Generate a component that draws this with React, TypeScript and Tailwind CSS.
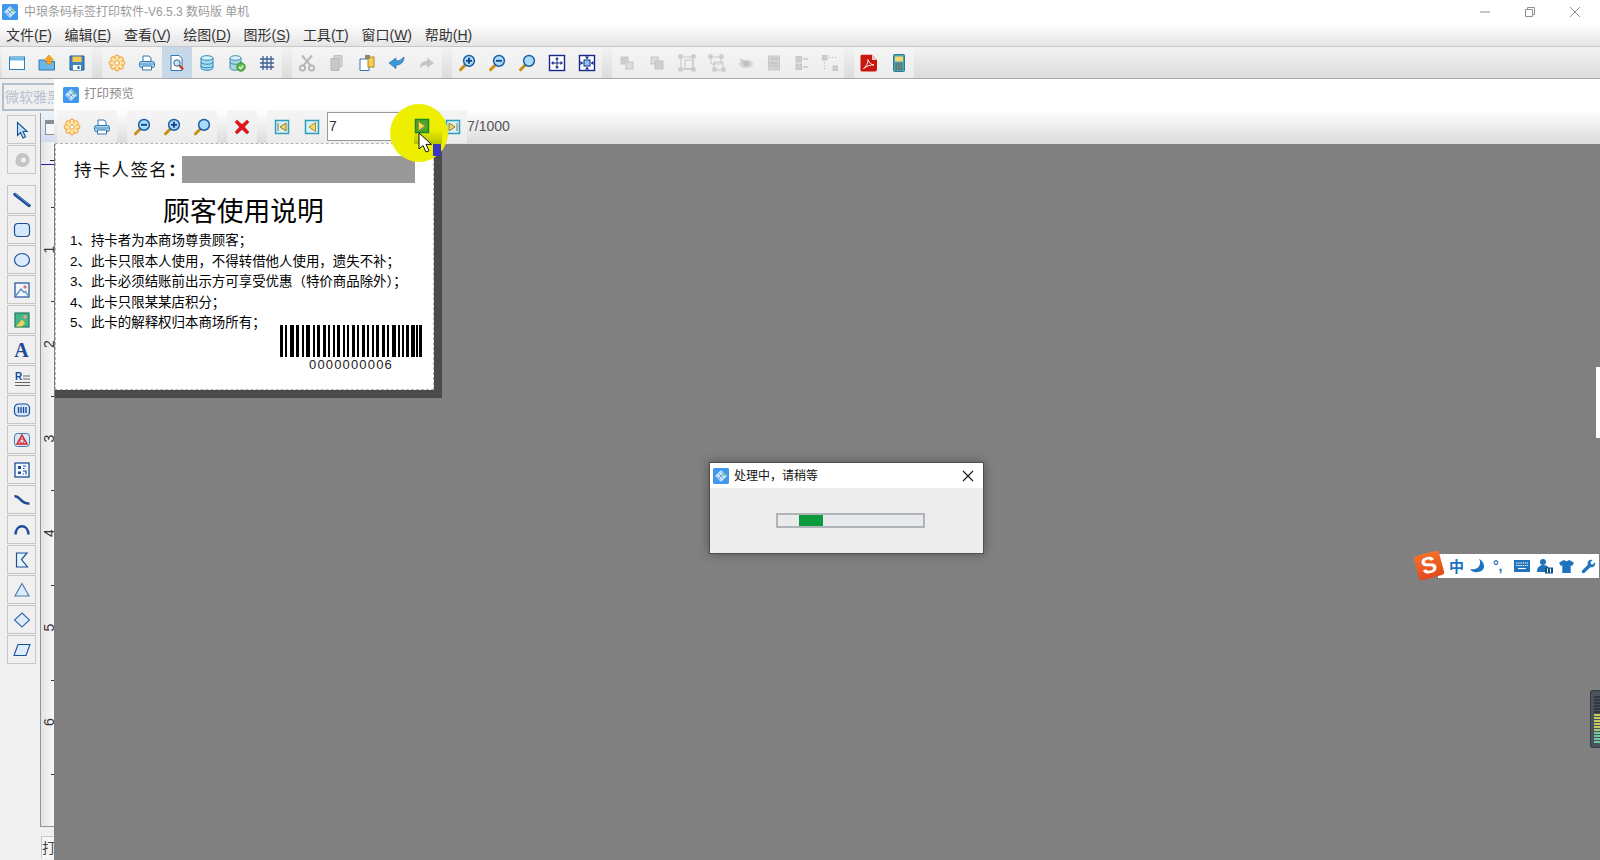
import React from "react";

const menus = [
  ["文件", "F"],
  ["编辑", "E"],
  ["查看", "V"],
  ["绘图", "D"],
  ["图形", "S"],
  ["工具", "T"],
  ["窗口", "W"],
  ["帮助", "H"],
];

const lines = [
  "1、持卡者为本商场尊贵顾客；",
  "2、此卡只限本人使用，不得转借他人使用，遗失不补；",
  "3、此卡必须结账前出示方可享受优惠（特价商品除外）；",
  "4、此卡只限某某店积分；",
];

function Svg({ size = 18, children }: { size?: number; children: React.ReactNode }) {
  return (
    <svg width={size} height={size} viewBox="0 0 18 18" fill="none">
      {children}
    </svg>
  );
}

function Logo({ size = 16 }: { size?: number }) {
  return (
    <svg width={size} height={size} viewBox="0 0 16 16">
      <rect width="16" height="16" rx="1.5" fill="#3f97ee" />
      <path d="M8 2 14 8 8 14 2 8Z" fill="#cfe6fb" />
      <path d="M5.5 5.500 10.500 10.500M8 3.500 12.500 8M3.500 8 8 12.500M10.500 5.500 5.500 10.500" stroke="#3f97ee" strokeWidth="0.800" />
      <circle cx="11" cy="6.500" r="1.300" fill="#7ecb5a" />
    </svg>
  );
}

const Gear = () => (
  <Svg>
    {[0, 45, 90, 135, 180, 225, 270, 315].map((a) => (
      <circle
        key={a}
        cx={9 + 5.6 * Math.cos((a * Math.PI) / 180)}
        cy={9 + 5.6 * Math.sin((a * Math.PI) / 180)}
        r="2.3"
        fill="#fde6a8"
        stroke="#e8952c"
        strokeWidth="0.9"
      />
    ))}
    <circle cx="9" cy="9" r="4.6" fill="#fde6a8" />
    <circle cx="9" cy="9" r="2.3" fill="#fff" stroke="#e8952c" />
  </Svg>
);

const Printer = () => (
  <Svg>
    <path d="M5 8V2h6l2 2v4" fill="#fff" stroke="#2f77ad" />
    <rect x="1.5" y="7.5" width="15" height="6" rx="2" fill="#a9d6f2" stroke="#2f77ad" />
    <path d="M4.5 12h9v4h-9z" fill="#fff" stroke="#2f77ad" />
    <path d="M1.5 10h15" stroke="#2f77ad" strokeWidth="0.7" />
  </Svg>
);

const Zoom = ({ mark }: { mark?: "+" | "-" }) => (
  <Svg>
    <path d="M2.5 15.8 7 11.2" stroke="#c98f17" strokeWidth="3" strokeLinecap="round" />
    <circle cx="11" cy="6.8" r="5.4" fill="#a8dcf8" stroke="#1b5da6" strokeWidth="1.5" />
    {mark && <path d="M8 6.8h6" stroke="#12408f" strokeWidth="1.8" />}
    {mark === "+" && <path d="M11 3.8v6" stroke="#12408f" strokeWidth="1.8" />}
  </Svg>
);

const GrayBlocks = ({ children }: { children: React.ReactNode }) => (
  <Svg>
    <g fill="#cecece" stroke="#c6c6c6">
      {children}
    </g>
  </Svg>
);

const Nav = ({ kind, green }: { kind: "first" | "prev" | "next" | "last"; green?: boolean }) => {
  const stroke = green ? "#1a8a2a" : "#2f9dbb";
  return (
    <Svg>
      <rect x="2.5" y="2.5" width="13" height="13" fill={green ? "#4ea62c" : "#d8f1f7"} stroke={stroke} strokeWidth="1.5" />
      {kind === "first" && <path d="M5 5v8M13 5v8L7 9z" stroke="#8a7a30" fill="#f6d860" />}
      {kind === "prev" && <path d="M12.5 4.5v9L6 9z" fill="#f6d860" stroke="#a89030" />}
      {kind === "next" && <path d="M5.5 4.5v9L12 9z" fill="#f6e060" stroke="#a89030" />}
      {kind === "last" && <path d="M13 5v8M5 5v8l6-4z" stroke="#8a7a30" fill="#f6d860" />}
    </Svg>
  );
};

const toolbarIcons: Record<string, React.ReactNode> = {
  window: (
    <Svg>
      <rect x="1.5" y="3" width="15" height="12.5" fill="#fff" stroke="#2c7eb6" />
      <rect x="2" y="3.5" width="14" height="3" fill="#6bbbe8" />
    </Svg>
  ),
  open: (
    <Svg>
      <path d="M1 6h5l1 1.5h9.5V16H1z" fill="#6db7e6" stroke="#2c78b0" />
      <path d="M11 1 6.5 6h2.4v4h4.2V6h2.4z" fill="#f6a623" stroke="#d98210" strokeWidth="0.6" />
    </Svg>
  ),
  save: (
    <Svg>
      <path d="M2 2h14v14H2z" fill="#3f86c4" stroke="#1f5f99" />
      <rect x="4.5" y="2.5" width="9" height="5.5" fill="#f7c84a" />
      <rect x="5" y="11" width="8" height="5" fill="#fff" />
      <rect x="9.5" y="12" width="2" height="3" fill="#1f5f99" />
    </Svg>
  ),
  gear: <Gear />,
  printer: <Printer />,
  preview: (
    <Svg>
      <path d="M3 1.5h8l3 3v12H3z" fill="#fff" stroke="#2c78b0" />
      <circle cx="9" cy="9" r="3.2" fill="#bfe5f7" stroke="#44607a" />
      <path d="m11.5 11.5 3.5 4" stroke="#d0342c" strokeWidth="2.2" />
    </Svg>
  ),
  db: (
    <Svg>
      <path d="M3 4v10c0 3 12 3 12 0V4" fill="#a8dcf2" stroke="#2c8ab8" />
      <ellipse cx="9" cy="4" rx="6" ry="2.3" fill="#d9f2fb" stroke="#2c8ab8" />
      <path d="M3 8c0 3 12 3 12 0M3 11.5c0 3 12 3 12 0" stroke="#2c8ab8" />
    </Svg>
  ),
  dbcheck: (
    <Svg>
      <path d="M2 4v10c0 3 11 3 11 0V4" fill="#a6d8e4" stroke="#3d8ca5" />
      <ellipse cx="7.5" cy="4" rx="5.5" ry="2.3" fill="#d9f2fb" stroke="#3d8ca5" />
      <path d="M2 8c0 3 11 3 11 0" stroke="#3d8ca5" />
      <circle cx="13" cy="13" r="4.2" fill="#5fbb46" stroke="#3a9030" />
      <path d="m11 13 1.6 1.6 2.6-3" stroke="#fff" strokeWidth="1.3" />
    </Svg>
  ),
  grid: (
    <Svg>
      <path d="M2 5h14M2 9h14M2 13h14M5 2v14M9 2v14M13 2v14" stroke="#3c5f96" strokeWidth="1.3" />
    </Svg>
  ),
  cut: (
    <Svg>
      <path d="M4 1.5 13 12M14 1.5 5 12" stroke="#b9b9b9" strokeWidth="2" />
      <circle cx="4.5" cy="14" r="2.6" stroke="#b4b4b4" strokeWidth="1.8" />
      <circle cx="13.5" cy="14" r="2.6" stroke="#b4b4b4" strokeWidth="1.8" />
    </Svg>
  ),
  copy: (
    <Svg>
      <path d="M6 1.5h8v11H6z" fill="#d2d2d2" stroke="#c0c0c0" />
      <path d="M3 4.5h8v12H3z" fill="#c8c8c8" stroke="#b8b8b8" />
    </Svg>
  ),
  paste: (
    <Svg>
      <path d="M2 5h9v11.5H2z" fill="#fff" stroke="#2c78b0" />
      <rect x="10" y="3" width="6" height="10" fill="#f4cf55" stroke="#b08a20" />
      <rect x="7" y="1" width="5" height="4" fill="#8a8a6a" />
    </Svg>
  ),
  undo: (
    <Svg>
      <path d="M16 3c0 6-4 8-8 8v3.5L1 9l7-5v3c3 0 5-1 8-4z" fill="#3d9ad8" stroke="#1f6fa8" strokeWidth="0.7" />
    </Svg>
  ),
  redo: (
    <Svg>
      <path d="M2 14c0-5 3-7 7-7V3.5l7 5.5-7 5v-3c-3 0-5 1-7 3z" fill="#c4c4c4" />
    </Svg>
  ),
  zoomin: <Zoom mark="+" />,
  zoomout: <Zoom mark="-" />,
  zoom: <Zoom />,
  fit: (
    <Svg>
      <rect x="1.5" y="1.5" width="15" height="15" fill="#fff" stroke="#14298a" strokeWidth="1.4" />
      <path d="M9 3 7 5.500h4zM9 15l-2-2.500h4zM3 9l2.500-2v4zM15 9l-2.500-2v4z" fill="#14298a" />
      <path d="M9 5v8M5 9h8" stroke="#14298a" />
    </Svg>
  ),
  fit2: (
    <Svg>
      <rect x="1.5" y="1.5" width="15" height="15" fill="#fff" stroke="#14298a" strokeWidth="1.4" />
      <rect x="6" y="6" width="6" height="6" fill="#8fc8f2" stroke="#14298a" />
      <path d="M9 5.500 7 2.500h4zM9 12.500l-2 3h4zM5.500 9l-3-2v4zM12.500 9l3-2v4z" fill="#14298a" />
    </Svg>
  ),
  front: (
    <GrayBlocks>
      <rect x="3" y="3" width="7" height="7" />
      <rect x="8" y="8" width="7" height="7" fill="#dcdcdc" />
    </GrayBlocks>
  ),
  back: (
    <GrayBlocks>
      <rect x="3" y="3" width="7" height="7" fill="#dcdcdc" />
      <rect x="7" y="7" width="8" height="8" />
    </GrayBlocks>
  ),
  group: (
    <GrayBlocks>
      <path d="M3 3h12v12H3z" fill="none" />
      <rect x="1" y="1" width="3" height="3" />
      <rect x="14" y="14" width="3" height="3" />
      <rect x="1" y="14" width="3" height="3" />
      <rect x="14" y="1" width="3" height="3" />
      <rect x="7" y="6" width="8" height="9" fill="none" />
    </GrayBlocks>
  ),
  ungroup: (
    <GrayBlocks>
      <path d="M3 3h10v7H3zM6 8h9v8H6z" fill="none" />
      <rect x="1" y="1" width="3" height="3" />
      <rect x="12" y="1" width="3" height="3" />
      <rect x="14" y="14" width="3" height="3" />
      <rect x="5" y="14" width="3" height="3" />
    </GrayBlocks>
  ),
  eye: (
    <Svg>
      <ellipse cx="9" cy="10" rx="7" ry="4.200" fill="#d6d6d6" />
      <circle cx="9" cy="9.500" r="2.800" fill="#bcbcbc" />
      <path d="m3 5 10 7" stroke="#c4c4c4" strokeWidth="1.500" />
    </Svg>
  ),
  book: (
    <Svg>
      <rect x="3.500" y="2" width="11" height="14" fill="#d4d4d4" stroke="#c8c8c8" />
      <path d="M5 5h8M5 9h8M5 12h8" stroke="#bcbcbc" />
    </Svg>
  ),
  list: (
    <GrayBlocks>
      <rect x="3" y="2.500" width="5.500" height="5.500" />
      <rect x="3" y="10" width="5.500" height="5.500" />
      <path d="M10 5h5M10 13h5" strokeWidth="1.500" />
    </GrayBlocks>
  ),
  flow: (
    <GrayBlocks>
      <rect x="1.500" y="1.500" width="4.500" height="4.500" />
      <rect x="12" y="12" width="4.500" height="4.500" />
      <path d="M8 3.500h8M3.500 8v8" fill="none" strokeDasharray="1.500 1.500" />
    </GrayBlocks>
  ),
  pdf: (
    <svg width="18" height="18" viewBox="0 0 18 18" fill="none">
      <path d="M2 .8h10L17 6v9.500a2 2 0 0 1-2 2H2a1.500 1.500 0 0 1-1.500-1.500V2.500A1.500 1.500 0 0 1 2 .8z" fill="#c9170f" />
      <path d="M12 .8V6h5z" fill="#f3c7c2" />
      <path d="M3.500 14.500C6 13 8.500 8.500 8 5.500c1 3 2.500 5 6 5.500-3-.3-7 .7-10.500 3.500z" stroke="#fff" strokeWidth="0.900" />
    </svg>
  ),
  calc: (
    <Svg>
      <rect x="3.500" y="0.500" width="11" height="17" rx="1" fill="#4ba3b8" stroke="#2b7a90" />
      <rect x="5" y="2.500" width="8" height="5" fill="#f7d96c" />
      <path d="M5.500 10h7M5.500 12.500h7M5.500 15h7" stroke="#75532a" strokeWidth="1.400" strokeDasharray="1.500 1" />
    </Svg>
  ),
};

const sideIcons: React.ReactNode[] = [
  <Svg key="a">
    <path d="M4.500 1.500v13l3-3 2.500 5.500 2.500-1.200-2.500-5.300h4.200z" fill="#bfe3fa" stroke="#1c4f96" strokeWidth="1.100" />
  </Svg>,
  <Svg key="b">
    <circle cx="9.500" cy="9" r="7" fill="#c4c4c4" />
    <path d="M2 11h5l-2 5z" fill="#c4c4c4" />
    <circle cx="10.500" cy="9" r="2.500" fill="#f0f0f0" />
  </Svg>,
  null,
  <Svg key="c">
    <path d="M2 3.500 16 14.500" stroke="#1d4f98" strokeWidth="3.400" strokeLinecap="round" />
    <path d="M2.500 3 16 13.500" stroke="#6ea6dc" strokeWidth="0.800" />
  </Svg>,
  <Svg key="d">
    <rect x="1.500" y="2.500" width="15" height="13" rx="3.500" fill="#d6e9fb" stroke="#1d4f98" strokeWidth="1.200" />
  </Svg>,
  <Svg key="e">
    <ellipse cx="9" cy="9" rx="7.500" ry="6.500" fill="#d9ebfc" stroke="#1d4f98" strokeWidth="1.200" />
  </Svg>,
  <Svg key="f">
    <rect x="2" y="2" width="14" height="14" fill="#eef6fc" stroke="#1d4f98" strokeWidth="1.200" />
    <circle cx="12" cy="6" r="1.700" fill="#e8716a" />
    <path d="M3 14.500 8 8l3 3.500 1.500-1 2.500 4" stroke="#5a8ac0" strokeWidth="1.300" />
  </Svg>,
  <Svg key="g">
    <rect x="2" y="2" width="14" height="14" fill="#46b58a" stroke="#1f7a5c" strokeWidth="1.200" />
    <circle cx="12" cy="6" r="1.800" fill="#f0a090" />
    <path d="M3 15.500 9 8.500l3 3.500-3 3.500z" fill="#f4d25a" />
  </Svg>,
  <span key="h" className="font-['Liberation_Serif',serif] text-[20px] font-bold leading-none text-[#1a4a9a]">
    A
  </span>,
  <Svg key="i">
    <text x="2" y="9" fontSize="10" fontWeight="700" fill="#1a4a9a" fontFamily="Liberation Sans">
      R
    </text>
    <path d="M10 5h7M10 8h7M2 11.500h15M2 14.500h15" stroke="#555" strokeWidth="0.900" />
  </Svg>,
  <Svg key="j">
    <rect x="1.500" y="3" width="15" height="12" rx="4" fill="#d6e9fb" stroke="#1d4f98" strokeWidth="1.200" />
    <path d="M5.500 6v6M8 6v6M10.500 6v6M13 6v6" stroke="#1d4f98" strokeWidth="1.400" />
  </Svg>,
  <Svg key="k">
    <rect x="1.500" y="2.500" width="15" height="13" rx="3" fill="#d6e9fb" stroke="#4a78b0" />
    <path d="M9 4 14 13H4z" stroke="#d8232a" strokeWidth="1.500" />
    <circle cx="9" cy="10" r="2.200" stroke="#d8232a" />
  </Svg>,
  <Svg key="l">
    <rect x="2" y="2" width="14" height="14" fill="#f3f9fe" stroke="#1d4f98" strokeWidth="1.300" />
    <path d="M5 5h3v3H5zM5 10.500h3v2.500H5z" fill="#1d4f98" />
    <path d="M10 5h3M10 7.500h1.500M10 10h3v3.500M11 13h-1" stroke="#1d4f98" strokeWidth="1.200" />
  </Svg>,
  <Svg key="m">
    <path d="M1.500 5.500C7 4 7 13 16.500 12.500" stroke="#1d4f98" strokeWidth="2.600" />
  </Svg>,
  <Svg key="n">
    <path d="M2.500 13.500C3 2.500 15 2.500 15.500 13.500" stroke="#1d4f98" strokeWidth="2.400" />
  </Svg>,
  <Svg key="o">
    <path d="M3.500 2h10.500L8.500 8.500l6 7.500h-11z" fill="#e6f2fc" stroke="#1d4f98" strokeWidth="1.200" />
  </Svg>,
  <Svg key="p">
    <path d="M9 2.500 16 15H2z" fill="#dcecfb" stroke="#4a78b0" strokeWidth="1.100" />
  </Svg>,
  <Svg key="q">
    <path d="M9 2 16.500 9 9 16 1.500 9z" fill="#dcecfb" stroke="#3a68a4" strokeWidth="1.100" />
  </Svg>,
  <Svg key="r">
    <path d="M5 3.500h12L13 14.500H1z" fill="#dcecfb" stroke="#1d4f98" strokeWidth="1.100" />
  </Svg>,
];

function ToolButton({ name, narrow, active }: { name: string; narrow?: boolean; active?: boolean }) {
  return (
    <div className={`flex h-full items-center justify-center ${narrow ? "w-[28px]" : "w-[30px]"} ${active ? "bg-[#c7d9e8]" : ""}`}>
      {toolbarIcons[name]}
    </div>
  );
}

function ToolGroup({ children }: { children: React.ReactNode }) {
  return <div className="flex h-full bg-linear-to-b from-[#f5f5f5] to-[#ececec]">{children}</div>;
}

const barWidths = [3, 2, 2, 3, 4, 2, 3, 3, 2, 2, 4, 3, 2, 2, 3, 3, 3, 2, 2, 3, 2, 2, 3, 3, 2, 2, 2, 3, 3, 2, 2, 3, 3, 2, 2, 3, 2, 2, 3, 3, 3, 2, 2, 3, 4, 2, 2, 2, 2, 2, 3, 2, 4, 1, 2, 1, 3];

function Barcode() {
  let x = 0;
  const bars = barWidths.map((w, i) => {
    const el = i % 2 === 0 ? <rect key={i} x={x} y="0" width={w} height="32" fill="#000" /> : null;
    x += w;
    return el;
  });
  return (
    <svg width="142" height="32" viewBox={`0 0 ${x} 32`} preserveAspectRatio="none" shapeRendering="crispEdges">
      {bars}
    </svg>
  );
}

function RulerMarks() {
  const nums = [1, 2, 3, 4, 5, 6];
  const ticks = [208, 302, 397, 491, 586, 681, 775];
  return (
    <svg width="13" height="684" viewBox="0 0 13 684" className="block overflow-visible">
      <path d="M0 22.500h13" stroke="#2a1fa8" />
      <path d="M9 18.500h4" stroke="#222" />
      {ticks.map((t) => (
        <path key={t} d={`M10 ${t - 143 + 0.5}h3`} stroke="#333" />
      ))}
      {nums.map((n, i) => (
        <text
          key={n}
          transform={`translate(13 ${107.500 + i * 94.500}) rotate(-90)`}
          textAnchor="middle"
          fontSize="14"
          fill="#333"
          fontFamily="Liberation Sans"
        >
          {n}
        </text>
      ))}
    </svg>
  );
}

export default function App() {
  return (
    <div className="relative flex h-[860px] w-[1600px] flex-col overflow-hidden bg-[#f0f0f0] font-['Liberation_Sans','Noto_Sans_CJK_SC',sans-serif]">
      {/* title + menu */}
      <div className="h-[47px] shrink-0 border-b border-[#c9c9c9] bg-linear-to-b from-white from-50% to-[#e5e5e5]">
        <div className="flex h-[23px] items-center pl-[2px]">
          <Logo />
          <span className="ml-[6px] text-[12px] text-[#9a9a9a]">中琅条码标签打印软件-V6.5.3 数码版 单机</span>
          <div className="ml-auto mr-[19px] flex items-center gap-[33px]">
            <svg width="12" height="12" viewBox="0 0 12 12"><path d="M1 6h10" stroke="#909090" /></svg>
            <svg width="12" height="12" viewBox="0 0 12 12" fill="none"><path d="M1.500 3.500h7v7h-7zM3.500 3.500v-2h7v7h-2" stroke="#909090" /></svg>
            <svg width="12" height="12" viewBox="0 0 12 12"><path d="m1 1 10 10M11 1 1 11" stroke="#909090" /></svg>
          </div>
        </div>
        <div className="flex h-[23px] items-center gap-[12.700px] pl-[6px] pt-[1px] text-[14px] text-[#333]">
          {menus.map(([label, key]) => (
            <span key={key}>
              {label}(<u>{key}</u>)
            </span>
          ))}
        </div>
      </div>

      {/* main toolbar */}
      <div className="flex h-[32px] shrink-0 gap-[10px] border-b border-[#a8a8a8] bg-linear-to-b from-[#f2f2f2] to-[#dcdcdc] pl-[2px]">
        <ToolGroup>
          <ToolButton name="window" />
          <ToolButton name="open" />
          <ToolButton name="save" />
        </ToolGroup>
        <ToolGroup>
          <ToolButton name="gear" />
          <ToolButton name="printer" />
          <ToolButton name="preview" active />
          <ToolButton name="db" />
          <ToolButton name="dbcheck" />
          <ToolButton name="grid" />
        </ToolGroup>
        <ToolGroup>
          <ToolButton name="cut" />
          <ToolButton name="copy" />
          <ToolButton name="paste" />
          <ToolButton name="undo" />
          <ToolButton name="redo" />
        </ToolGroup>
        <ToolGroup>
          <ToolButton name="zoomin" />
          <ToolButton name="zoomout" />
          <ToolButton name="zoom" />
          <ToolButton name="fit" />
          <ToolButton name="fit2" />
        </ToolGroup>
        <ToolGroup>
          <ToolButton name="front" />
          <ToolButton name="back" />
          <ToolButton name="group" />
          <ToolButton name="ungroup" />
          <ToolButton name="eye" narrow />
          <ToolButton name="book" narrow />
          <ToolButton name="list" narrow />
          <ToolButton name="flow" narrow />
        </ToolGroup>
        <ToolGroup>
          <ToolButton name="pdf" />
          <ToolButton name="calc" />
        </ToolGroup>
      </div>

      <div className="flex min-h-0 flex-1">
        {/* designer column behind the preview window */}
        <div className="flex w-[54px] shrink-0 flex-col">
          <div className="ml-[2px] mt-[4px] flex h-[28px] items-center overflow-hidden border-2 border-r-0 border-[#b4bfcc] pl-[1px] text-[14px] whitespace-nowrap text-[#b9c1cf]">
            微软雅黑
          </div>
          <div className="mt-[2px] flex h-[714px]">
            <div className="flex w-[40px] flex-col pl-[7px] pt-[2px]">
              {sideIcons.map((icon, i) =>
                icon === null ? (
                  <div key={i} className="h-[10px]" />
                ) : (
                  <div key={i} className="mb-[1px] flex h-[29px] w-[29px] items-center justify-center border border-[#c6c6c6]">
                    {icon}
                  </div>
                )
              )}
            </div>
            <div className="flex w-[14px] flex-col border-b border-l border-[#8d94a3] bg-linear-to-r from-[#e4e4e4] to-[#f7f7f7]">
              <div className="flex h-[29px] shrink-0 items-start justify-end bg-linear-to-b from-[#eef2f8] to-[#cfdcee] pt-[7px]">
                <div className="h-[15px] w-[9px] border border-r-0 border-[#8a8f96] bg-[#f4f6f8]">
                  <div className="h-[3px] bg-[#8a8f96]" />
                </div>
              </div>
              <RulerMarks />
            </div>
          </div>
          <div className="ml-[41px] mt-[9px] flex h-[23px] items-center overflow-hidden border-l border-t border-[#c8c8c8] bg-[#f6f6f6] text-[14px] text-[#444]">
            打
          </div>
        </div>

        {/* print preview window */}
        <div className="relative flex min-w-0 flex-1 flex-col">
          <div className="flex h-[31px] shrink-0 items-center bg-white pl-[9px]">
            <Logo />
            <span className="ml-[5px] text-[12.500px] text-[#8c8c8c]">打印预览</span>
          </div>
          <div className="flex h-[34px] shrink-0 gap-[10px] border-b border-[#dedede] bg-linear-to-b from-white to-[#dcdcdc] pl-[3px]">
            <ToolGroup>
              <ToolButton name="gear" />
              <ToolButton name="printer" />
            </ToolGroup>
            <ToolGroup>
              <ToolButton name="zoomout" />
              <ToolButton name="zoomin" />
              <ToolButton name="zoom" />
            </ToolGroup>
            <ToolGroup>
              <div className="flex w-[30px] items-center justify-center">
                <svg width="18" height="18" viewBox="0 0 18 18">
                  <path d="M4 2 9 6.500 14 2 16 4 11.500 9 16 14 14 16 9 11.500 4 16 2 14 6.500 9 2 4z" fill="#e3141b" stroke="#b5121a" strokeWidth="0.500" />
                </svg>
              </div>
            </ToolGroup>
            <ToolGroup>
              <div className="flex w-[30px] items-center justify-center"><Nav kind="first" /></div>
              <div className="flex w-[30px] items-center justify-center"><Nav kind="prev" /></div>
              <div className="my-[2px] mr-[1px] flex w-[79px] items-center border border-[#9a9a9a] bg-white pl-[1px] text-[14px] text-[#333]">7</div>
              <div className="flex w-[30px] items-center justify-center"><div className="h-[18px]" /></div>
              <div className="flex w-[30px] items-center justify-center pl-[1px]"><Nav kind="last" /></div>
            </ToolGroup>
            <span className="ml-[-10px] self-center text-[14px] text-[#555]">7/1000</span>
          </div>

          {/* label on the gray canvas */}
          <div className="flex-1 bg-[#808080] pl-[1px]">
            <div className="-mt-[1px] w-fit bg-[#4b4b4b] pb-[8px] pr-[8px]">
              <div className="h-[247px] w-[379px] border border-dashed border-[#b5b5b5] bg-white pl-[14px] pt-[12px] text-black">
                <div className="flex h-[27px] items-center">
                  <span className="ml-[4px] mt-[1px] w-[108px] shrink-0 text-[17.500px] tracking-[1.300px] whitespace-nowrap text-[#111]">
                    持卡人签名<b>：</b>
                  </span>
                  <div className="h-[27px] w-[233px] bg-[#999999]" />
                </div>
                <div className="mt-[12px] flex h-[34px] items-center justify-center pr-[16px] text-[26.800px] leading-none">顾客使用说明</div>
                <div className="mt-[2px] text-[13.450px] leading-[20.500px] whitespace-nowrap">
                  {lines.map((line) => (
                    <div key={line}>{line}</div>
                  ))}
                  <div className="flex items-start justify-between pr-[11px]">
                    <span>5、此卡的解释权归本商场所有；</span>
                    <div className="mt-[12px] flex flex-col items-center">
                      <Barcode />
                      <span className="mt-[1px] font-['Liberation_Sans',sans-serif] text-[13px] leading-[14px] tracking-[1.150px] text-[#222]">0000000006</span>
                    </div>
                  </div>
                </div>
              </div>
            </div>
          </div>
        </div>
      </div>

      {/* screen recorder highlight + cursor */}
      <div className="absolute left-[390px] top-[104px] h-[58px] w-[58px] rounded-full bg-[#eeee00]" />
      <div className="absolute left-[414px] top-[130px] h-[14px] w-[28px] bg-linear-to-b from-transparent to-[#b4c200]" />
      <div className="absolute left-[433px] top-[144px] h-[12px] w-[8px] bg-[#3b36c4]" />
      <div className="absolute left-[413px] top-[117px]"><Nav kind="next" green /></div>
      <svg className="absolute left-[418px] top-[132px]" width="15" height="22" viewBox="0 0 15 22">
        <path d="M1 1v16l4-3.500 3 6.500 3-1.300-3-6.300h5.500z" fill="#fff" stroke="#111" strokeWidth="1" />
      </svg>

      {/* progress dialog */}
      <div className="absolute left-[709px] top-[462px] flex h-[92px] w-[275px] flex-col border border-[#4e4e4e] bg-[#ededed] shadow-[0_0_10px_rgba(0,0,0,0.35)]">
        <div className="flex h-[25px] items-center bg-white pl-[3px] pr-[9px] text-[12px] text-[#111]">
          <Logo />
          <span className="ml-[5px]">处理中，请稍等</span>
          <svg className="ml-auto" width="12" height="12" viewBox="0 0 12 12">
            <path d="m1 1 10 10M11 1 1 11" stroke="#111" strokeWidth="1.100" />
          </svg>
        </div>
        <div className="flex flex-1 items-start justify-center pt-[25px]">
          <div className="ml-[7px] h-[15px] w-[149px] border-2 border-[#b0b3b8] bg-[#e9eaeb] pl-[21px]">
            <div className="h-full w-[24px] bg-[#0b9a3e]" />
          </div>
        </div>
      </div>

      {/* sogou IME bar */}
      <div className="absolute left-[1438px] top-[554px] flex h-[24px] w-[161px] items-center bg-white pl-[11px] text-[#1f72bd]">
        <span className="text-[15px] font-bold leading-none">中</span>
        <svg className="ml-[5px]" width="16" height="16" viewBox="0 0 16 16"><path d="M10 1c3 4 0 12-9 10 3 5 13 4 14-2 .5-3-2-7-5-8z" fill="#1f72bd" /></svg>
        <span className="ml-[8px] w-[14px] text-[14px] font-bold leading-none">°,</span>
        <svg className="ml-[7px]" width="16" height="12" viewBox="0 0 16 12"><rect width="16" height="12" fill="#1f72bd" /><path d="M2 3h12M2 5.500h12" stroke="#fff" strokeWidth="1.200" strokeDasharray="1.500 0.700" /><path d="M4 8.500h8" stroke="#fff" strokeWidth="1.200" /></svg>
        <svg className="ml-[7px]" width="16" height="16" viewBox="0 0 16 16"><circle cx="6" cy="4" r="3" fill="#1f72bd" /><path d="M0 14c0-5 3-7 6-7s5 1 6 3H8v4z" fill="#1f72bd" /><rect x="8" y="9.500" width="8" height="6" fill="#14507f" /><path d="M10.500 10.500v4M13.500 10.500v4" stroke="#fff" /></svg>
        <svg className="ml-[6px]" width="15" height="15" viewBox="0 0 16 16"><path d="M5 1 8 2.500 11 1l5 3-2 3.500-1.500-.8V15h-9V6.700L2 7.500 0 4z" fill="#1f72bd" /></svg>
        <svg className="ml-[7px]" width="15" height="15" viewBox="0 0 16 16"><path d="M15 3.500 12 6 10.500 5 10 3.500 12.500 1C10 0 7 1.500 7 4.500c0 .6.100 1 .3 1.500L1 12.500C0 14 2 16 3.500 15L10 8.700c3 1 6-1.700 5-5.200z" fill="#1f72bd" /></svg>
      </div>
      <div className="absolute left-[1416px] top-[553px] flex h-[25px] w-[26px] -rotate-[15deg] items-center justify-center rounded-[3px] bg-linear-to-b from-[#f4702a] to-[#e2491b] text-[23px] leading-none font-extrabold text-white">
        S
      </div>

      {/* edge widgets */}
      <div className="absolute left-[1596px] top-[367px] h-[71px] w-[4px] bg-white" />
      <div className="absolute left-[1590px] top-[690px] flex h-[58px] w-[10px] flex-col gap-[1px] rounded-l-[3px] border border-r-0 border-[#333a44] bg-[#4a525c] pl-[3px] pt-[5px]">
        {["#2f3640", "#2f3640", "#2f3640", "#2f3640", "#2f3640", "#2f3640", "#c8c860", "#c8c860", "#c8c860", "#c8c860", "#c8c860", "#a0c870", "#70c8a0", "#70c8a0", "#70c8a0", "#70c8a0"].map((c, i) => (
          <div key={i} className="h-[2px] w-full" style={{ backgroundColor: c }} />
        ))}
      </div>
    </div>
  );
}
